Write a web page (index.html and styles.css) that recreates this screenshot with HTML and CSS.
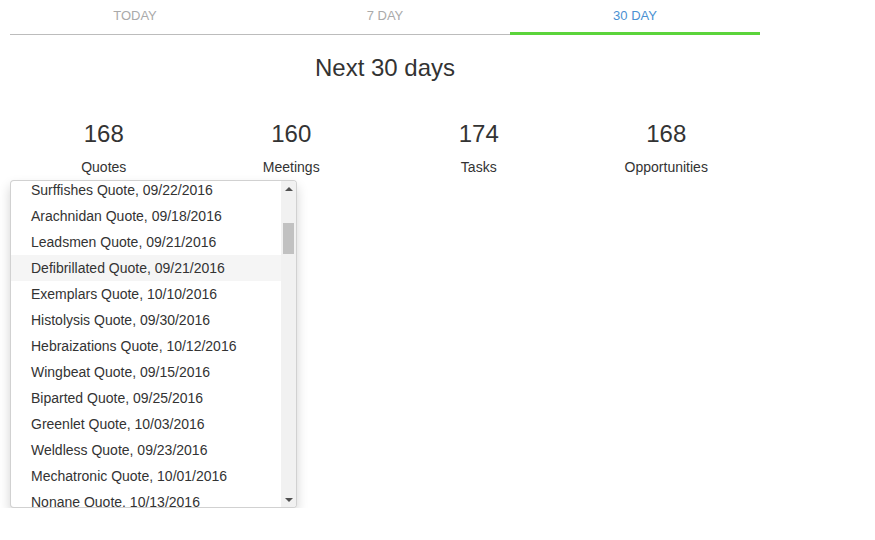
FILE: index.html
```html
<!DOCTYPE html>
<html>
<head>
<meta charset="utf-8">
<link rel="stylesheet" href="styles.css">
</head>
<body>
<div class="wrap">
  <div class="tabs">
    <div class="tab">TODAY</div>
    <div class="tab">7 DAY</div>
    <div class="tab active">30 DAY</div>
  </div>
  <h2 class="title">Next 30 days</h2>
  <div class="stats">
    <div class="stat"><div class="num">168</div><div class="label">Quotes</div></div>
    <div class="stat"><div class="num">160</div><div class="label">Meetings</div></div>
    <div class="stat"><div class="num">174</div><div class="label">Tasks</div></div>
    <div class="stat"><div class="num">168</div><div class="label">Opportunities</div></div>
  </div>
  <div class="dropdown">
    <ul class="list">
      <li>Surffishes Quote, 09/22/2016</li>
      <li>Arachnidan Quote, 09/18/2016</li>
      <li>Leadsmen Quote, 09/21/2016</li>
      <li class="hover">Defibrillated Quote, 09/21/2016</li>
      <li>Exemplars Quote, 10/10/2016</li>
      <li>Histolysis Quote, 09/30/2016</li>
      <li>Hebraizations Quote, 10/12/2016</li>
      <li>Wingbeat Quote, 09/15/2016</li>
      <li>Biparted Quote, 09/25/2016</li>
      <li>Greenlet Quote, 10/03/2016</li>
      <li>Weldless Quote, 09/23/2016</li>
      <li>Mechatronic Quote, 10/01/2016</li>
      <li>Nonane Quote, 10/13/2016</li>
    </ul>
    <div class="scrollbar">
      <div class="arrow up"></div>
      <div class="track"><div class="thumb"></div></div>
      <div class="arrow down"></div>
    </div>
  </div>
</div>
</body>
</html>
```

FILE: styles.css
```css
html, body {
  margin: 0;
  padding: 0;
  background: #fff;
}
body {
  font-family: "Liberation Sans", Arial, sans-serif;
  color: #333;
}
.wrap {
  width: 750px;
  padding-left: 10px;
}
.tabs {
  display: grid;
  grid-template-columns: repeat(3, 1fr);
  border-bottom: 1px solid #bcbcbc;
}
.tab {
  position: relative;
  height: 34px;
  line-height: 31px;
  text-align: center;
  font-size: 13px;
  color: #aaa;
}
.tab.active {
  color: #4a90d2;
}
.tab.active::after {
  content: "";
  position: absolute;
  left: 0;
  right: 0;
  bottom: -1px;
  height: 3px;
  background: #5bd43b;
}
.title {
  margin: 19px 0 0;
  font-size: 24px;
  line-height: 28px;
  font-weight: normal;
  text-align: center;
  color: #333;
}
.stats {
  display: grid;
  grid-template-columns: repeat(4, 1fr);
  margin-top: 38px;
  text-align: center;
}
.num {
  font-size: 24px;
  line-height: 28px;
}
.label {
  margin-top: 9px;
  font-size: 14px;
  line-height: 20px;
}
.dropdown {
  margin-top: 3px;
  width: 285px;
  height: 326px;
  border: 1px solid rgba(0,0,0,0.18);
  border-radius: 4px;
  box-shadow: 0 6px 12px rgba(0,0,0,0.175);
  display: flex;
  overflow: hidden;
  background: #fff;
}
.list {
  list-style: none;
  margin: -4px 0 0;
  padding: 0;
  flex: 1;
  overflow: hidden;
}
.list li {
  height: 26px;
  line-height: 26px;
  padding-left: 20px;
  font-size: 14px;
  color: #333;
  white-space: nowrap;
}
.list li.hover {
  background: #f5f5f5;
}
.scrollbar {
  width: 15px;
  background: #f1f1f1;
  display: flex;
  flex-direction: column;
}
.arrow {
  height: 15px;
  display: flex;
  align-items: center;
  justify-content: center;
}
.arrow::before {
  content: "";
  width: 0;
  height: 0;
  border-left: 4px solid transparent;
  border-right: 4px solid transparent;
}
.arrow.up::before {
  border-bottom: 4px solid #505050;
}
.arrow.down::before {
  border-top: 4px solid #505050;
}
.track {
  flex: 1;
  padding-top: 27px;
}
.thumb {
  margin: 0 2px;
  height: 31px;
  background: #c1c1c1;
}
```
